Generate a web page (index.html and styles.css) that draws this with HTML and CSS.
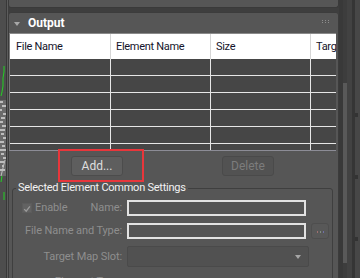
FILE: index.html
```html
<!DOCTYPE html>
<html lang="en">
<head>
    <meta charset="UTF-8">
    <meta name="viewport" content="width=device-width, initial-scale=1.0">
    <title>Render Elements - Output</title>
    <link rel="stylesheet" href="styles.css">
</head>
<body>
    <div class="app">
        <!-- left viewport edge -->
        <div class="gutter">
            <svg width="6" height="278" viewBox="0 0 6 278">
                <polyline points="4,66 4,72 3,78 3,86 2,92 1,96" fill="none" stroke="#22d322" stroke-width="1"/>
                <rect x="0" y="100" width="6" height="76" fill="#6a6a6a"/>
                <path d="M0 102h3M2 106h4M0 110h2M3 114h3M1 118h4M0 122h3M2 126h4M0 130h5M1 134h3M3 138h3M0 142h4M2 146h3M0 150h6M1 154h3M3 158h3M0 162h4M2 166h2M0 170h5" stroke="#d8d8d8" stroke-width="1.5"/>
                <polyline points="5,160 3,168 1,176" fill="none" stroke="#c0c0c0" stroke-width="1"/>
                <polyline points="2,176 1,182" fill="none" stroke="#22d322" stroke-width="1"/>
                <polyline points="4,192 4,200" fill="none" stroke="#22d322" stroke-width="1"/>
            </svg>
        </div>

        <div class="main">
            <div class="prev-panel"></div>

            <div class="rollout">
                <div class="rollout-head">
                    <span class="caret"></span>
                    <span class="rollout-title">Output</span>
                    <span class="grip"><i></i><i></i><i></i><i></i><i></i><i></i></span>
                </div>

                <div class="list">
                    <div class="list-head">
                        <div class="cell">File Name</div>
                        <div class="cell">Element Name</div>
                        <div class="cell">Size</div>
                        <div class="cell">Target Map Slot</div>
                    </div>
                    <div class="list-body">
                        <div class="row"><div class="cell"></div><div class="cell"></div><div class="cell"></div><div class="cell"></div></div>
                        <div class="row"><div class="cell"></div><div class="cell"></div><div class="cell"></div><div class="cell"></div></div>
                        <div class="row"><div class="cell"></div><div class="cell"></div><div class="cell"></div><div class="cell"></div></div>
                        <div class="row"><div class="cell"></div><div class="cell"></div><div class="cell"></div><div class="cell"></div></div>
                        <div class="row"><div class="cell"></div><div class="cell"></div><div class="cell"></div><div class="cell"></div></div>
                        <div class="row"><div class="cell"></div><div class="cell"></div><div class="cell"></div><div class="cell"></div></div>
                    </div>
                </div>

                <div class="actions">
                    <button class="btn">Add...</button>
                    <button class="btn" disabled>Delete</button>
                    <span class="highlight"></span>
                </div>

                <fieldset class="group">
                    <legend>Selected Element Common Settings</legend>
                    <div class="form">
                        <div class="label enable-label">
                            <span class="check">
                                <svg width="10" height="10" viewBox="0 0 10 10"><path d="M1.5 5.2 L4 7.8 L8.6 1.6" fill="none" stroke="#9a9a9a" stroke-width="1.6"/></svg>
                            </span>
                            <span class="enable-text">Enable</span>
                            <span class="push">Name:</span>
                        </div>
                        <div class="textbox"></div>
                        <div></div>

                        <div class="label">File Name and Type:</div>
                        <div class="textbox"></div>
                        <button class="dots" disabled><i class="r"></i><i class="g"></i><i class="b"></i></button>

                        <div class="label tall">Target Map Slot:</div>
                        <div class="dropdown"><span class="arrow"></span></div>

                        <div class="label">Element Type:</div>
                        <div></div>
                        <div></div>
                    </div>
                </fieldset>
            </div>
        </div>

        <!-- scrollbar area -->
        <div class="side">
            <div class="side-edge"></div>
            <div class="track"><div class="thumb"></div></div>
            <div class="side-mid"></div>
            <div class="side-line"></div>
            <div class="side-outer"><i></i><i></i><i></i></div>
        </div>
    </div>
</body>
</html>
```

FILE: styles.css
```css
    body {
        margin: 0;
        background: #3e3e3e;
        font-family: Roboto, 'Liberation Sans', sans-serif;
        font-size: 11px;
        overflow: hidden;
    }

    .app {
        display: flex;
        width: 360px;
        height: 278px;
        overflow: hidden;
    }

    .gutter {
        width: 6px;
        background: #4d4d4d;
        border-right: 1px solid #383838;
        box-shadow: 1px 0 0 #5c5c5c;
        flex: none;
    }

    .gutter svg {
        display: block;
    }

    .main {
        width: 331px;
        margin-left: 1px;
        flex: none;
    }

    .prev-panel {
        height: 7px;
        background: #565656;
        border: 1px solid #3a3a3a;
        border-top: none;
        border-radius: 0 0 3px 3px;
        margin-bottom: 4px;
    }

    .rollout {
        background: #565656;
        border: 1px solid #3c3c3c;
        border-radius: 3px;
        height: 300px;
    }

    .rollout-head {
        height: 20px;
        display: flex;
        align-items: center;
        padding-left: 5px;
    }

    .caret {
        width: 0;
        height: 0;
        border-left: 3px solid transparent;
        border-right: 3px solid transparent;
        border-top: 4px solid #a8a8a8;
        margin-top: 1px;
    }

    .rollout-title {
        color: #ffffff;
        font-weight: bold;
        font-size: 12px;
        margin-left: 8px;
    }

    .grip {
        margin-left: auto;
        margin-right: 8px;
        margin-top: -4px;
        display: grid;
        grid-template-columns: repeat(3, 2px);
        gap: 1px;
    }

    .grip i {
        width: 1px;
        height: 1px;
        background: #8e8e8e;
    }

    /* list */
    .list {
        width: 326px;
        border-top: 1px solid #8a8a8a;
        border-left: 1px solid #7a7a7a;
        border-bottom: 1px solid #8c8c96;
        overflow: hidden;
    }

    .list-head,
    .row {
        display: grid;
        grid-template-columns: 101px 100px 100px 100px;
    }

    .list-head {
        height: 25px;
        background: #ffffff;
    }

    .list-head .cell {
        border-right: 1px solid #d6d6d6;
        color: #14142a;
        font-size: 11px;
        letter-spacing: -0.3px;
        padding-left: 5px;
        line-height: 25px;
        white-space: nowrap;
    }

    .list-head .cell:first-child {
        padding-left: 6px;
    }

    .list-body {
        height: 91px;
        overflow: hidden;
        background: #464646;
    }

    .row {
        height: 16px;
        border-bottom: 1px solid #e6e6e6;
    }

    .row .cell {
        border-right: 1px solid #e6e6e6;
    }

    /* buttons */
    .actions {
        position: relative;
        display: flex;
        gap: 99px;
        padding: 5px 0 0 62px;
    }

    .btn {
        width: 52px;
        height: 20px;
        padding: 0;
        background: #5e5e5e;
        border: 1px solid #4c4c4c;
        border-radius: 3px;
        color: #dedede;
        font-family: inherit;
        font-size: 12px;
    }

    .btn:disabled {
        background: #525252;
        border-color: #4a4a4a;
        color: #7c7c7c;
    }

    .highlight {
        position: absolute;
        left: 49px;
        top: -2px;
        width: 86px;
        height: 33px;
        box-sizing: border-box;
        border: 2px solid #e8363b;
        pointer-events: none;
    }

    /* group */
    .group {
        margin: 5px 0 0 3px;
        width: 321px;
        box-sizing: border-box;
        padding: 5px 0 0 0;
        border: 1px solid #3f3f3f;
        border-radius: 3px;
        min-width: 0;
    }

    .group legend {
        color: #f2f2f2;
        font-size: 11px;
        letter-spacing: -0.25px;
        line-height: 14px;
        padding: 0 2px;
        margin-left: 3px;
    }

    .form {
        display: grid;
        grid-template-columns: 109px 179px 18px;
        grid-template-rows: 16px 16px 21px 16px;
        column-gap: 5px;
        row-gap: 7px;
    }

    .label {
        color: #8e8e8e;
        font-size: 11px;
        letter-spacing: -0.1px;
        text-align: right;
        line-height: 16px;
        white-space: nowrap;
    }

    .label.tall {
        line-height: 21px;
    }

    .enable-label {
        display: flex;
        align-items: center;
        padding-left: 9px;
    }

    .check {
        width: 10px;
        height: 10px;
        background: #626262;
        border: 1px solid #5c5c5c;
        box-sizing: border-box;
        display: flex;
    }

    .enable-text {
        margin-left: 3px;
    }

    .push {
        margin-left: auto;
    }

    .textbox {
        border: 2px solid #e2e2e2;
        background: #545454;
        box-sizing: border-box;
    }

    .dots {
        padding: 0;
        background: #585858;
        border: 1px solid #4e4e4e;
        border-radius: 3px;
        display: flex;
        align-items: center;
        justify-content: center;
        gap: 2px;
    }

    .dots i {
        width: 1px;
        height: 2px;
        margin-top: 2px;
    }

    .dots .r { background: #a07070; }
    .dots .g { background: #809080; }
    .dots .b { background: #7070a8; }

    .dropdown {
        grid-column: 2 / 4;
        width: 182px;
        box-sizing: border-box;
        background: #515151;
        border: 1px solid #4a4a4a;
        border-radius: 2px;
        display: flex;
        align-items: center;
        justify-content: flex-end;
        padding-right: 7px;
    }

    .arrow {
        width: 0;
        height: 0;
        border-left: 3px solid transparent;
        border-right: 3px solid transparent;
        border-top: 4px solid #a6a6a6;
    }

    /* scrollbar side */
    .side {
        flex: 1;
        display: flex;
        background: #3a3a3a;
    }

    .side-edge {
        width: 4px;
        background: #393939;
    }

    .track {
        width: 4px;
        background: #3d3d3d;
        padding-top: 83px;
    }

    .thumb {
        height: 180px;
        background: #595959;
    }

    .side-mid {
        width: 5px;
        background: #424242;
    }

    .side-line {
        width: 3px;
        background: #353535;
    }

    .side-outer {
        flex: 1;
        background: #474747;
        display: flex;
        flex-direction: column;
        padding-top: 113px;
        gap: 58px;
    }

    .side-outer i {
        width: 3px;
        height: 4px;
        background: #333333;
    }
```
